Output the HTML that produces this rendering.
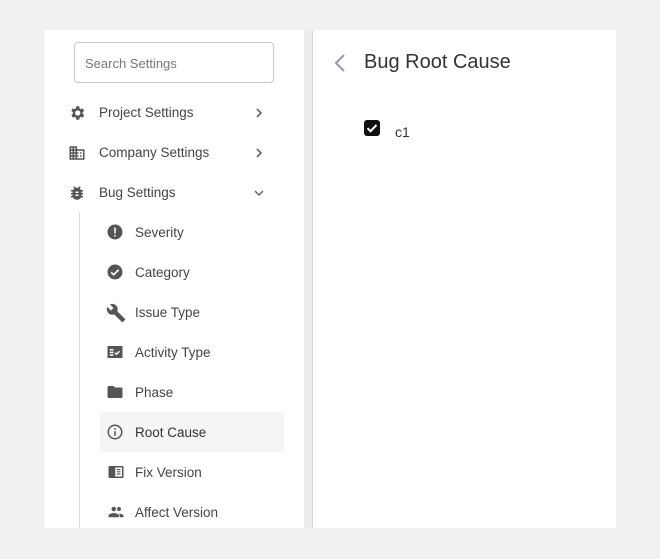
<!DOCTYPE html>
<html><head><style>
body{margin:0;width:660px;height:559px;background:#f1f1f1;font-family:"Liberation Sans",sans-serif;position:relative;overflow:hidden}
.panel{position:absolute;left:44px;top:30px;width:572px;height:498px;background:#fff;overflow:hidden}
.search{position:absolute;left:30px;top:12px;width:200px;height:41px;border:1px solid #c8c8c8;border-radius:4px;box-sizing:border-box;font-size:13px;color:#777;padding:13px 0 0 10px}
.item{position:absolute;left:24px;font-size:13.5px;color:#444;height:20px;line-height:20px}
.item svg{position:absolute;left:0;top:1px}
.item span{position:absolute;left:31px;white-space:nowrap}
.sub{position:absolute;left:56px;width:184px;height:40px;font-size:13.5px;color:#444;line-height:41px}
.sub svg{position:absolute;left:6px;top:11px}
.sub span{position:absolute;left:35px}
.chev{position:absolute;left:209px}
.vline{position:absolute;left:35px;top:182px;width:1px;height:320px;background:#ddd}
.div1{position:absolute;left:260px;top:0;width:8px;height:498px;background:#ececec}
.div2{position:absolute;left:268px;top:0;width:1px;height:498px;background:#d8d8d8}
</style></head><body>
<div class="panel">
<div class="search">Search Settings</div>
<div class="item" style="top:73px"><svg width="18" height="18" viewBox="0 0 24 24"><path fill="#555" d="M19.4 13a7.5 7.5 0 000-2l2.1-1.6-2-3.5-2.5 1a7 7 0 00-1.7-1L15 3h-4l-.4 2.9a7 7 0 00-1.7 1l-2.5-1-2 3.5L6.6 11a7.5 7.5 0 000 2l-2.1 1.6 2 3.5 2.5-1a7 7 0 001.7 1L11 21h4l.4-2.9a7 7 0 001.7-1l2.5 1 2-3.5zM13 15.5a3.5 3.5 0 110-7 3.5 3.5 0 010 7z"/></svg><span>Project Settings</span></div>
<svg class="chev" style="top:77px" width="12" height="12" viewBox="0 0 12 12"><path d="M4 2l4 4-4 4" stroke="#666" stroke-width="1.6" fill="none"/></svg>
<div class="item" style="top:113px"><svg width="18" height="18" viewBox="0 0 24 24"><path fill="#555" d="M12 7V3H2v18h20V7H12zM6 19H4v-2h2v2zm0-4H4v-2h2v2zm0-4H4V9h2v2zm0-4H4V5h2v2zm4 12H8v-2h2v2zm0-4H8v-2h2v2zm0-4H8V9h2v2zm0-4H8V5h2v2zm10 12h-8v-2h2v-2h-2v-2h2v-2h-2V9h8v10zm-2-8h-2v2h2v-2zm0 4h-2v2h2v-2z"/></svg><span>Company Settings</span></div>
<svg class="chev" style="top:117px" width="12" height="12" viewBox="0 0 12 12"><path d="M4 2l4 4-4 4" stroke="#666" stroke-width="1.6" fill="none"/></svg>
<div class="item" style="top:153px"><svg width="18" height="18" viewBox="0 0 24 24"><path fill="#555" d="M20 8h-2.8a6 6 0 00-1.8-2l1.6-1.6L15.6 3l-2.2 2.2a6 6 0 00-2.8 0L8.4 3 7 4.4 8.6 6a6 6 0 00-1.8 2H4v2h2.1a6 6 0 000 1v1H4v2h2v1a6 6 0 00.1 1H4v2h2.8a6 6 0 0010.4 0H20v-2h-2.1a6 6 0 00.1-1v-1h2v-2h-2v-1a6 6 0 00-.1-1H20V8zm-6 8h-4v-2h4v2zm0-4h-4v-2h4v2z"/></svg><span>Bug Settings</span></div>
<svg class="chev" style="top:157px" width="12" height="12" viewBox="0 0 12 12"><path d="M2 4l4 4 4-4" stroke="#666" stroke-width="1.5" fill="none"/></svg>
<div class="vline"></div>
<div class="sub" style="top:182px"><svg width="18" height="18" viewBox="0 0 24 24"><circle cx="12" cy="12" r="10" fill="#555"/><rect x="11" y="6" width="2" height="8" fill="#fff"/><rect x="11" y="16" width="2" height="2" fill="#fff"/></svg><span>Severity</span></div>
<div class="sub" style="top:222px"><svg width="18" height="18" viewBox="0 0 24 24"><circle cx="12" cy="12" r="10" fill="#555"/><path d="M7 12.5l3.2 3.2L17 9" stroke="#fff" stroke-width="2.2" fill="none"/></svg><span>Category</span></div>
<div class="sub" style="top:262px"><svg width="20" height="20" viewBox="0 0 24 24"><path fill="#555" d="M22.7 19l-9.1-9.1c.9-2.3.4-5-1.5-6.9-2-2-5-2.4-7.4-1.3L9 6 6 9 1.6 4.7C.4 7.1.9 10.1 2.9 12.1c1.9 1.9 4.6 2.4 6.9 1.5l9.1 9.1c.4.4 1 .4 1.4 0l2.3-2.3c.5-.4.5-1.1.1-1.4z"/></svg><span>Issue Type</span></div>
<div class="sub" style="top:302px"><svg width="18" height="18" viewBox="0 0 24 24"><rect x="2" y="4" width="20" height="16" fill="#555"/><rect x="5" y="8" width="5" height="2" fill="#fff"/><rect x="5" y="11.5" width="5" height="2" fill="#fff"/><rect x="5" y="15" width="5" height="2" fill="#fff"/><path d="M12 13l2 2 4-4" stroke="#fff" stroke-width="1.8" fill="none"/></svg><span>Activity Type</span></div>
<div class="sub" style="top:342px"><svg width="18" height="18" viewBox="0 0 24 24"><path fill="#555" d="M10 4H4a2 2 0 00-2 2v12a2 2 0 002 2h16a2 2 0 002-2V8a2 2 0 00-2-2h-8l-2-2z"/></svg><span>Phase</span></div>
<div class="sub" style="top:382px;background:#f5f5f5;color:#333"><svg width="18" height="18" viewBox="0 0 24 24"><circle cx="12" cy="12" r="9" stroke="#555" stroke-width="2" fill="none"/><rect x="11" y="11" width="2" height="6" fill="#555"/><rect x="11" y="7" width="2" height="2" fill="#555"/></svg><span>Root Cause</span></div>
<div class="sub" style="top:422px"><svg width="20" height="18" viewBox="0 0 24 24"><rect x="2" y="4" width="20" height="16" rx="1.5" fill="#555"/><rect x="11" y="6" width="9" height="12" fill="#fff"/><rect x="13" y="8" width="5" height="1.5" fill="#555"/><rect x="13" y="11" width="5" height="1.5" fill="#555"/><rect x="13" y="14" width="5" height="1.5" fill="#555"/></svg><span>Fix Version</span></div>
<div class="sub" style="top:462px"><svg width="20" height="18" viewBox="0 0 24 24"><circle cx="9" cy="8" r="3" fill="#555"/><circle cx="16" cy="8" r="2.6" fill="#555"/><path fill="#555" d="M2 19v-2c0-2.5 4-3.5 7-3.5s7 1 7 3.5v2zM17 19v-2c0-1.3-.7-2.3-1.6-3 2.8.2 6.6 1.2 6.6 3v2z"/></svg><span>Affect Version</span></div>
<div class="div1"></div><div class="div2"></div>
<svg style="position:absolute;left:289px;top:23px" width="14" height="20" viewBox="0 0 14 20"><path d="M11 2L3 10l8 8" stroke="#9a98b0" stroke-width="2" fill="none"/></svg>
<div style="position:absolute;left:320px;top:21px;font-size:20px;color:#333">Bug Root Cause</div>
<div style="position:absolute;left:320px;top:90px;width:16px;height:16px;background:#111;border-radius:3px"><svg width="16" height="16" viewBox="0 0 16 16"><path d="M3.5 8.2l3 3 6-6.2" stroke="#fff" stroke-width="2" fill="none"/></svg></div>
<div style="position:absolute;left:351px;top:94px;font-size:14px;color:#333">c1</div>
</div>
</body></html>
